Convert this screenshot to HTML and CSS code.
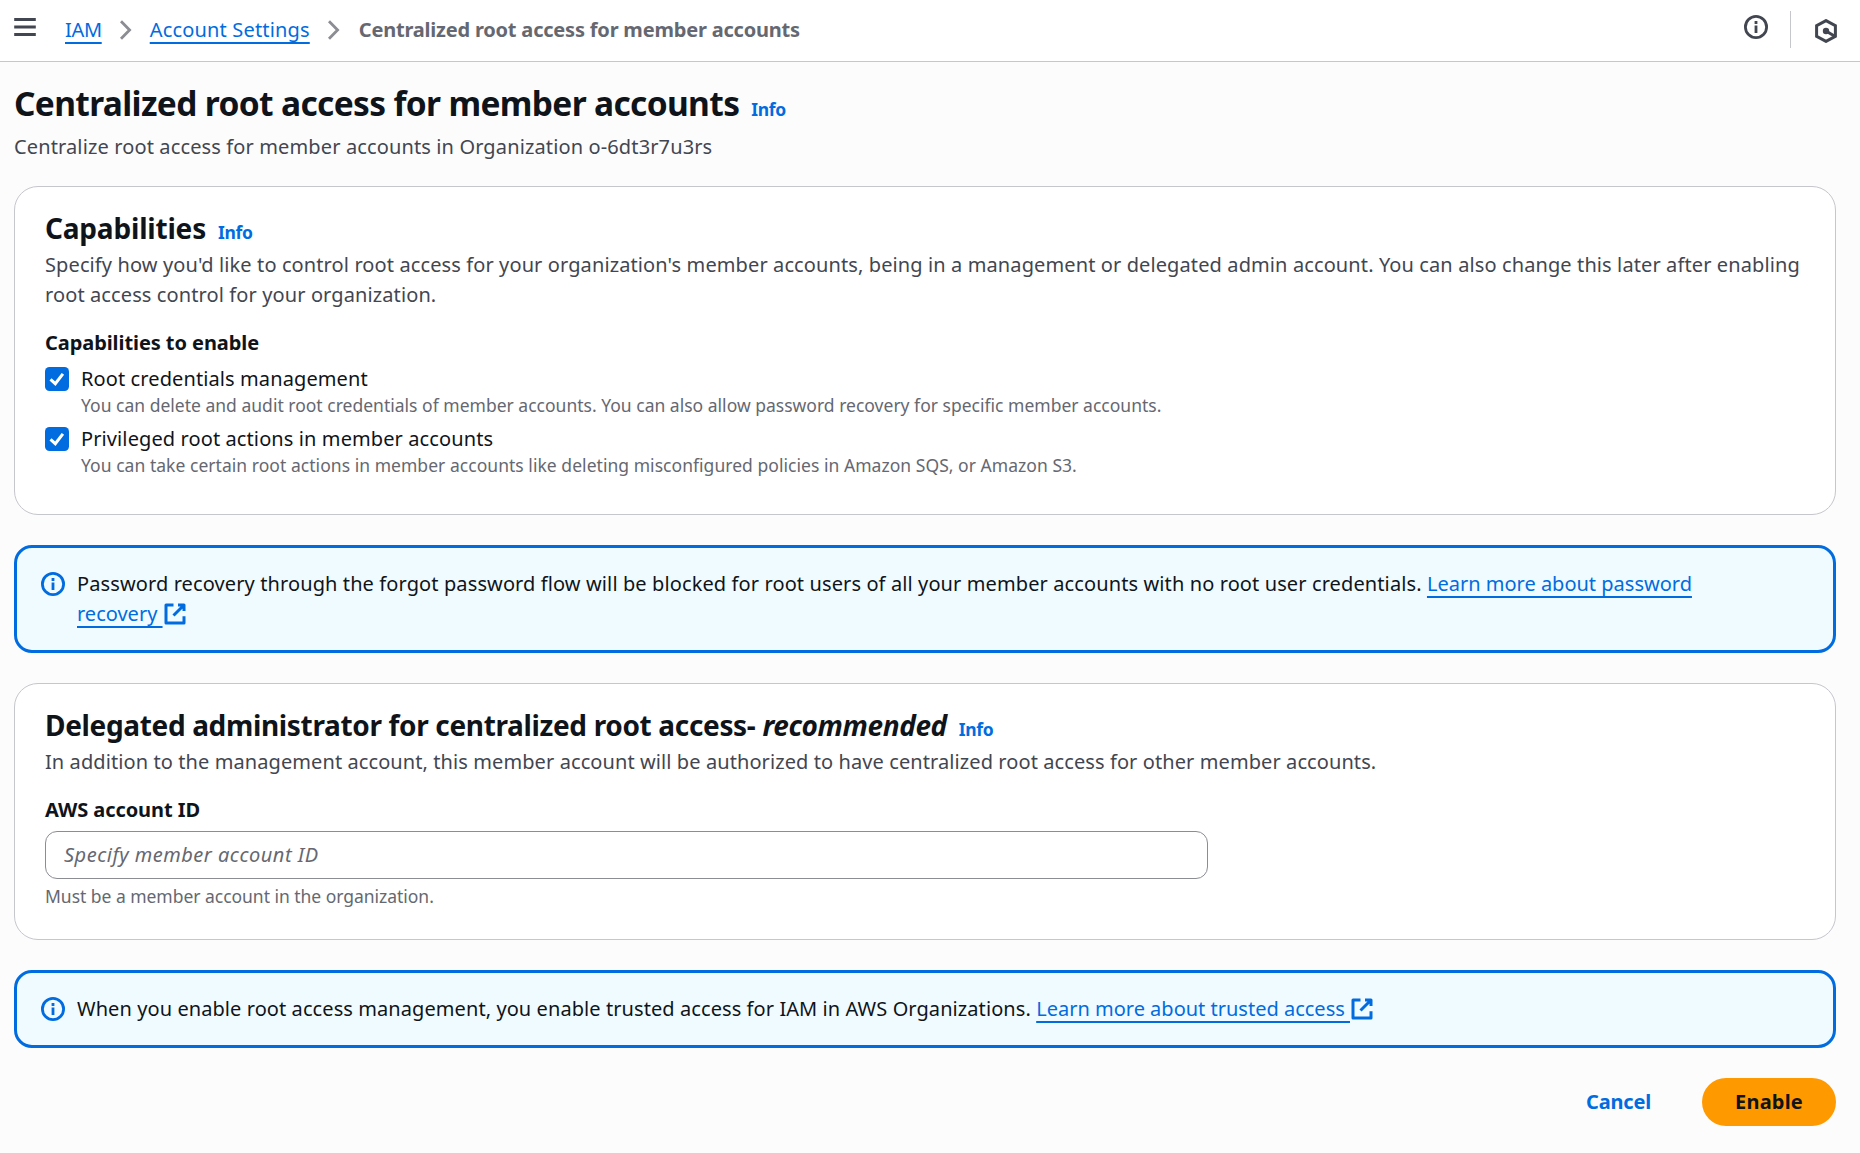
FILE: index.html
```html
<!DOCTYPE html>
<html lang="en">
<head>
<meta charset="utf-8">
<title>Centralized root access for member accounts</title>
<link rel="stylesheet" href="styles.css">
</head>
<body>
<header class="topbar">
  <svg class="menu-icon" width="24" height="24" viewBox="0 0 24 24"><path d="M1.2 4.5h21.6M1.2 12h21.6M1.2 19.5h21.6"/></svg>
  <nav class="crumbs">
    <a class="link crumb-root">IAM</a>
    <svg class="chevron" width="14" height="22" viewBox="0 0 14 22"><path d="M2 2.2 10.6 11 2 19.8"/></svg>
    <a class="link crumb-settings">Account Settings</a>
    <svg class="chevron" width="14" height="22" viewBox="0 0 14 22"><path d="M2 2.2 10.6 11 2 19.8"/></svg>
    <span class="crumb-current">Centralized root access for member accounts</span>
  </nav>
  <div class="tools">
    <svg class="info-icon" width="24" height="24" viewBox="0 0 24 24"><circle cx="12" cy="12" r="10.6"/><path d="M12 6v3M12 10.5V18"/></svg>
    <span class="divider"></span>
    <svg class="hex-icon" width="24" height="24" viewBox="0 0 24 24"><path d="M12 1.6 21.4 6.7v10.6L12 22.4 2.6 17.300V6.700z"/><path d="M12 12l8.800 5.300"/><circle cx="12" cy="12" r="3.2"/></svg>
  </div>
</header>

<main class="page">
  <div class="page-head">
    <div class="heading-row"><h1>Centralized root access for member accounts</h1><a class="info">Info</a></div>
    <p class="subtitle">Centralize root access for member accounts in Organization o-6dt3r7u3rs</p>
  </div>

  <section class="card capabilities">
    <div class="heading-row"><h2 class="title-short">Capabilities</h2><a class="info">Info</a></div>
    <p class="desc">Specify how you'd like to control root access for your organization's member accounts, being in a management or delegated admin account. You can also change this later after enabling root access control for your organization.</p>
    <h3 class="field-label">Capabilities to enable</h3>
    <div class="options">
      <div class="option">
        <svg class="checkbox" width="24" height="24" viewBox="0 0 24 24"><rect width="24" height="24" rx="4.500"/><path d="M5.500 12.300 10.300 16.700 17.900 6.800"/></svg>
        <div><div class="option-label">Root credentials management</div><div class="hint hint-option">You can delete and audit root credentials of member accounts. You can also allow password recovery for specific member accounts.</div></div>
      </div>
      <div class="option">
        <svg class="checkbox" width="24" height="24" viewBox="0 0 24 24"><rect width="24" height="24" rx="4.500"/><path d="M5.500 12.300 10.300 16.700 17.900 6.800"/></svg>
        <div><div class="option-label">Privileged root actions in member accounts</div><div class="hint hint-option hint-loose">You can take certain root actions in member accounts like deleting misconfigured policies in Amazon SQS, or Amazon S3.</div></div>
      </div>
    </div>
  </section>

  <section class="alert">
    <svg class="info-icon" width="24" height="24" viewBox="0 0 24 24"><circle cx="12" cy="12" r="10.6"/><path d="M12 6v3M12 10.5V18"/></svg>
    <p class="alert-text">Password recovery through the forgot password flow will be blocked for root users of all your member accounts with no root user credentials. <a class="link">Learn more about password recovery&nbsp;</a><svg class="external" width="24" height="24" viewBox="0 0 16 16"><path d="M10 2h4v4M7 9l6.500-6.500M14 9.500V14H2V2h5"/></svg></p>
  </section>

  <section class="card delegated">
    <div class="heading-row"><h2 class="title-long">Delegated administrator for centralized root access- <em>recommended</em></h2><a class="info">Info</a></div>
    <p class="desc desc-delegated">In addition to the management account, this member account will be authorized to have centralized root access for other member accounts.</p>
    <label class="field-label" for="account">AWS account ID</label>
    <input class="input" id="account" type="text" placeholder="Specify member account ID">
    <div class="hint hint-field">Must be a member account in the organization.</div>
  </section>

  <section class="alert">
    <svg class="info-icon" width="24" height="24" viewBox="0 0 24 24"><circle cx="12" cy="12" r="10.6"/><path d="M12 6v3M12 10.5V18"/></svg>
    <p class="alert-text alert-text-trusted">When you enable root access management, you enable trusted access for IAM in AWS Organizations. <a class="link">Learn more about trusted access&nbsp;</a><svg class="external" width="24" height="24" viewBox="0 0 16 16"><path d="M10 2h4v4M7 9l6.500-6.500M14 9.500V14H2V2h5"/></svg></p>
  </section>

  <div class="actions">
    <button class="btn btn-link" type="button">Cancel</button>
    <button class="btn btn-primary" type="button">Enable</button>
  </div>
</main>
</body>
</html>
```
FILE: styles.css
```css
* { box-sizing: border-box; }
body {
  margin: 0;
  background: #fcfcfd;
  color: #0f141a;
  font: 400 20px/30px "Noto Sans", "Open Sans", sans-serif;
}
h1, h2, h3, p { margin: 0; }
svg { display: block; flex: none; fill: none; }

.topbar {
  display: flex;
  align-items: flex-start;
  height: 62px;
  padding: 0 22px 0 13px;
  background: #fff;
  border-bottom: 1px solid #c6c6cd;
}
.menu-icon { margin-top: 15px; stroke: #424650; stroke-width: 2.8; }
.crumbs { display: flex; align-items: center; margin: 15px 0 0 28px; white-space: nowrap; }
.chevron { margin: 0 16.5px 0 17.5px; stroke: #8c8c94; stroke-width: 2.8; }
.crumb-root { letter-spacing: -0.33px; }
.crumb-settings { letter-spacing: 0.17px; }
.crumb-current { color: #656871; font-weight: 700; letter-spacing: -0.2px; margin-left: 1px; }
.tools { display: flex; margin-left: auto; }
.tools .info-icon { margin-top: 15px; color: #424650; }
.divider { width: 1px; height: 37px; margin: 11px 23px 0 22px; background: #c6c6cd; }
.hex-icon { margin-top: 19px; stroke: #424650; stroke-width: 3; }
.hex-icon circle { fill: #424650; stroke: none; }

.link {
  color: #006ce0;
  text-decoration: underline;
  text-decoration-thickness: 2px;
  text-decoration-skip-ink: none;
  text-underline-offset: 5px;
}

.page { padding: 19px 24px 0 14px; }
.page-head { margin-bottom: 24px; }
.heading-row { display: flex; align-items: baseline; white-space: nowrap; }
h1 { font-size: 33.5px; line-height: 45px; font-weight: 700; letter-spacing: -0.65px; }
h2 { font-size: 28px; line-height: 36px; font-weight: 700; }
.title-short { letter-spacing: -0.19px; }
.title-long { letter-spacing: -0.34px; }
.title-long em { letter-spacing: -0.4px; }
.info { margin-left: 12px; color: #006ce0; font-size: 17.5px; line-height: 24px; font-weight: 700; letter-spacing: -0.35px; }
.subtitle { margin-top: 6px; color: #424650; letter-spacing: 0.13px; }

.card { border: 1px solid #c6c6cd; border-radius: 24px; background: #fff; padding: 23px 30px 0; }
.capabilities { height: 329px; }
.delegated { height: 257px; }
.desc { margin-top: 4px; color: #424650; letter-spacing: 0.11px; }
.desc-delegated { letter-spacing: 0.09px; }
.field-label { display: block; margin-top: 18px; font-size: 20px; line-height: 30px; font-weight: 700; letter-spacing: -0.075px; }
.options { display: flex; flex-direction: column; gap: 6px; margin-top: 6px; }
.option { display: flex; gap: 12px; }
.option-label { letter-spacing: 0.105px; }
.checkbox { margin-top: 3px; }
.checkbox rect { fill: #006ce0; }
.checkbox path { stroke: #fff; stroke-width: 3; }
.hint { color: #656871; font-size: 17.5px; line-height: 24px; }
.hint-option { margin-top: -1px; padding-bottom: 1px; letter-spacing: 0.01px; }
.hint-loose { letter-spacing: 0.04px; }
.hint-field { letter-spacing: -0.03px; }

.input {
  display: block;
  width: 1163px;
  height: 48px;
  margin: 6px 0 5px;
  padding: 0 18px 2px;
  border: 1px solid #8c8c94;
  border-radius: 12px;
  background: #fff;
  font: inherit;
  color: #0f141a;
}
.input::placeholder { color: #656871; font-style: italic; letter-spacing: 0.5px; opacity: 1; }

.alert {
  display: flex;
  gap: 12px;
  margin: 30px 0;
  padding: 21px 60px 21px 24px;
  border: 3px solid #006ce0;
  border-radius: 18px;
  background: #f0fbff;
}
.alert .info-icon { margin-top: 3px; color: #006ce0; }
.info-icon { stroke: currentColor; stroke-width: 2.8; }
.alert-text { letter-spacing: 0.11px; }
.alert-text-trusted { letter-spacing: 0.08px; }
.alert-text .link { letter-spacing: 0; }
.external { display: inline-block; vertical-align: top; margin-top: 3px; stroke: #006ce0; stroke-width: 2; stroke-linejoin: round; }

.actions { display: flex; justify-content: flex-end; align-items: center; }
.btn { height: 48px; border: 0; border-radius: 24px; font: 700 20px/30px "Noto Sans", "Open Sans", sans-serif; }
.btn-link { padding: 0 22px; margin-right: 29px; background: transparent; color: #006ce0; letter-spacing: -0.17px; }
.btn-primary { width: 134px; padding: 0; background: #ff9900; color: #0f141a; letter-spacing: 0.2px; }
```
